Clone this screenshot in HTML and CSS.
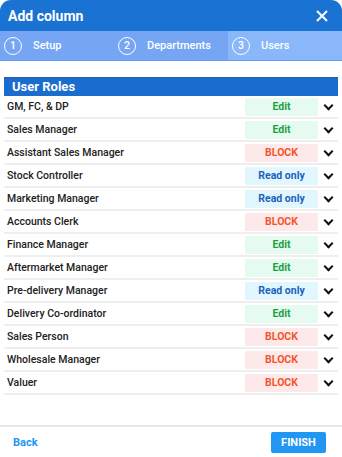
FILE: index.html
```html
<!doctype html>
<html lang="en">
    <head>
        <meta charset="UTF-8" />
        <meta name="viewport" content="width=device-width, initial-scale=1.0" />
        <title>Add column</title>
        <link rel="stylesheet" href="styles.css">
    </head>
    <body>
        <div class="dialog">
            <div class="dialog-header">
                <h1>Add column</h1>
                <svg class="close" width="14" height="14" viewBox="0 0 14 14">
                    <path d="M2 2 L12 12 M12 2 L2 12" stroke="#fff" stroke-width="2" fill="none" />
                </svg>
            </div>

            <div class="stepper">
                <div class="step"><span class="num">1</span>Setup</div>
                <div class="step"><span class="num">2</span>Departments</div>
                <div class="step active"><span class="num">3</span>Users</div>
            </div>

            <div class="content">
                <div class="section-title">User Roles</div>
                <div class="roles">
                    <div class="role"><span class="name">GM, FC, &amp; DP</span><span class="badge edit">Edit</span><span class="chev"></span></div>
                    <div class="role"><span class="name">Sales Manager</span><span class="badge edit">Edit</span><span class="chev"></span></div>
                    <div class="role"><span class="name">Assistant Sales Manager</span><span class="badge block">BLOCK</span><span class="chev"></span></div>
                    <div class="role"><span class="name">Stock Controller</span><span class="badge read">Read only</span><span class="chev"></span></div>
                    <div class="role"><span class="name">Marketing Manager</span><span class="badge read">Read only</span><span class="chev"></span></div>
                    <div class="role"><span class="name">Accounts Clerk</span><span class="badge block">BLOCK</span><span class="chev"></span></div>
                    <div class="role"><span class="name">Finance Manager</span><span class="badge edit">Edit</span><span class="chev"></span></div>
                    <div class="role"><span class="name">Aftermarket Manager</span><span class="badge edit">Edit</span><span class="chev"></span></div>
                    <div class="role"><span class="name">Pre-delivery Manager</span><span class="badge read">Read only</span><span class="chev"></span></div>
                    <div class="role"><span class="name">Delivery Co-ordinator</span><span class="badge edit">Edit</span><span class="chev"></span></div>
                    <div class="role"><span class="name">Sales Person</span><span class="badge block">BLOCK</span><span class="chev"></span></div>
                    <div class="role"><span class="name">Wholesale Manager</span><span class="badge block">BLOCK</span><span class="chev"></span></div>
                    <div class="role"><span class="name">Valuer</span><span class="badge block">BLOCK</span><span class="chev"></span></div>
                </div>
            </div>

            <div class="dialog-footer">
                <a href="#" class="back">Back</a>
                <a href="#" class="finish">FINISH</a>
            </div>
        </div>
    </body>
</html>
```

FILE: styles.css
```css
body {
    margin: 0;
    font-family: Roboto, "Liberation Sans", Arial, sans-serif;
    background-color: #fff;
    color: #222;
}
.dialog {
    width: 342px;
    height: 457px;
    display: flex;
    flex-direction: column;
    background-color: #fff;
}
.dialog-header {
    height: 31px;
    display: flex;
    align-items: center;
    justify-content: space-between;
    padding: 0 13px 0 8px;
    background-color: #1a73d3;
    border-radius: 11px 11px 0 0;
}
.dialog-header h1 {
    margin: 0;
    font-size: 14px;
    font-weight: bold;
    color: #fff;
}
.stepper {
    display: flex;
    height: 29px;
    background-color: #76a6f3;
    border-bottom: 1px solid #6a9bec;
}
.step {
    flex: 1;
    display: flex;
    align-items: center;
    padding-left: 4px;
    font-size: 11px;
    font-weight: 500;
    color: #fff;
}
.step.active {
    background-color: #8ab6fa;
}
.num {
    width: 16px;
    height: 16px;
    border: 1.5px solid #fff;
    border-radius: 50%;
    display: inline-flex;
    align-items: center;
    justify-content: center;
    font-size: 10.5px;
    margin-right: 11px;
}
.content {
    flex: 1;
    padding: 16px 4px 0;
}
.section-title {
    height: 18px;
    line-height: 18px;
    background-color: #1a6ccf;
    border-top: 1px solid #2d5fa8;
    color: #fff;
    font-size: 13px;
    font-weight: bold;
    padding-left: 8px;
}
.role {
    display: flex;
    align-items: center;
    height: 21px;
    border-bottom: 2px solid #eeeeee;
    padding-left: 3px;
}
.name {
    flex: 1;
    font-size: 10.5px;
    font-weight: 500;
}
.badge {
    width: 73px;
    height: 18px;
    line-height: 18px;
    text-align: center;
    font-size: 10.5px;
    font-weight: bold;
}
.badge.edit {
    background-color: #e5fbef;
    color: #1e9f48;
}
.badge.block {
    background-color: #fde9ea;
    color: #f2552c;
}
.badge.read {
    background-color: #e2f6fd;
    color: #1a62be;
}
.chev {
    width: 20px;
    height: 18px;
    position: relative;
}
.chev::after {
    content: "";
    position: absolute;
    left: 7px;
    top: 4px;
    width: 5px;
    height: 5px;
    border-right: 2px solid #111;
    border-bottom: 2px solid #111;
    transform: rotate(45deg);
}
.dialog-footer {
    height: 30px;
    border-top: 2px solid #e8e8e8;
    display: flex;
    align-items: center;
    justify-content: space-between;
    padding: 0 16px 0 13px;
}
.back {
    font-size: 11px;
    font-weight: bold;
    color: #2196f3;
    text-decoration: none;
}
.finish {
    display: inline-block;
    width: 55px;
    height: 21px;
    line-height: 21px;
    text-align: center;
    background-color: #2196f3;
    color: #fff;
    font-size: 11px;
    font-weight: bold;
    text-decoration: none;
    border-radius: 2px;
}
```
